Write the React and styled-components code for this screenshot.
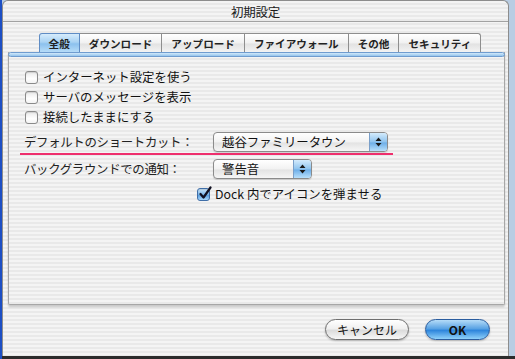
import React from 'react';
import styled, { createGlobalStyle } from 'styled-components';

const GlobalStyle = createGlobalStyle`
  html, body {
    margin: 0;
    padding: 0;
  }
  body {
    width: 515px;
    height: 359px;
    overflow: hidden;
    background: linear-gradient(to right, #1d4fc4 0 2px, #b9cde3 2px);
    font-family: "Noto Sans CJK JP", "Liberation Sans", sans-serif;
    color: #111;
  }
`;

const pinstripe = `repeating-linear-gradient(to bottom, #f4f4f4 0 2px, #e9e9e9 2px 4px)`;

const Page = styled.div`
  display: flex;
  flex-direction: column;
  height: 359px;
`;

const Window = styled.div`
  margin-left: 2px;
  width: 507px;
  height: 356px;
  background: ${pinstripe};
  border: 1px solid #8d8d8d;
  border-bottom: none;
  border-radius: 6px 6px 0 0;
  box-sizing: border-box;
  display: flex;
  flex-direction: column;
`;

const BottomEdge = styled.div`
  height: 3px;
  background: linear-gradient(to right, #1d4fc4 0 2px, #2c2c2c 2px);
`;

const TitleBar = styled.div`
  height: 20px;
  border-bottom: 1px solid #a2a2a2;
  display: flex;
  align-items: center;
  justify-content: center;
  font-size: 12.5px;
  color: #1a1a1a;
  letter-spacing: -0.2px;
`;

const Content = styled.div`
  display: flex;
  flex-direction: column;
  padding: 11px 3px 0 5px;
`;

const TabBar = styled.div`
  display: flex;
  justify-content: center;
  padding-left: 7px;
  height: 19px;
  position: relative;
  z-index: 1;
`;

const Tab = styled.div`
  height: 19px;
  padding: 0 9px;
  box-sizing: border-box;
  display: flex;
  align-items: center;
  font-size: 10.6px;
  font-weight: 700;
  color: #222;
  border: 1px solid ${(p) => (p.$active ? '#5f8cc4' : '#8e8e8e')};
  border-bottom: none;
  border-left-width: ${(p) => (p.$first ? '1px' : '0')};
  border-radius: ${(p) => (p.$first ? '3px 0 0 0' : p.$last ? '0 3px 0 0' : '0')};
  background: ${(p) =>
    p.$active
      ? 'linear-gradient(to bottom, #d6ecfc 0%, #a9d2f3 45%, #8cc1ee 55%, #b6dcf8 100%)'
      : 'linear-gradient(to bottom, #ffffff 0%, #f1f1f1 50%, #e2e2e2 55%, #f3f3f3 100%)'};
`;

const Panel = styled.div`
  height: 252px;
  border: 1px solid #a7a7a7;
  border-top: none;
  border-radius: 0 0 2px 2px;
  box-shadow: 0 2px 2px rgba(0, 0, 0, 0.18);
  background: ${pinstripe};
  display: flex;
  flex-direction: column;
`;

const PanelRule = styled.div`
  height: 3px;
  margin: 0 -1px;
  border-radius: 3px;
  border: 1px solid #6f9ccf;
  background: linear-gradient(to bottom, #d2e9fb, #94c4ec);
`;

const PanelBody = styled.div`
  display: flex;
  flex-direction: column;
  padding: 10px 0 0 16px;
  font-size: 12.4px;
`;

const CheckRow = styled.label`
  display: flex;
  align-items: center;
  gap: 5px;
  height: 20px;
  margin-left: ${(p) => p.$indent || 0}px;
  margin-top: ${(p) => p.$gap || 0}px;
`;

const Box = styled.span`
  width: 13px;
  height: 13px;
  box-sizing: border-box;
  border-radius: 3px;
  border: 1px solid ${(p) => (p.$checked ? '#3f6ea8' : '#8a8a8a')};
  background: ${(p) =>
    p.$checked
      ? 'linear-gradient(to bottom, #cfe8fb 0%, #7ab5e8 50%, #5a9fe0 55%, #a7d6fb 100%)'
      : 'linear-gradient(to bottom, #e9e9e9 0%, #ffffff 60%, #f3f3f3 100%)'};
  box-shadow: inset 0 1px 1px rgba(0, 0, 0, 0.12);
  position: relative;
  flex: none;
`;

const Check = styled.svg`
  position: absolute;
  left: 0;
  top: -3px;
`;

const FormRow = styled.div`
  display: flex;
  align-items: center;
  height: 20px;
  margin-top: ${(p) => p.$gap || 0}px;
  margin-left: -1px;
  position: relative;

  &::after {
    content: '';
    display: ${(p) => (p.$marked ? 'block' : 'none')};
    position: absolute;
    left: -4px;
    width: 373px;
    bottom: -3px;
    height: 2px;
    background: #ee2f6d;
  }
`;

const Label = styled.span`
  width: 189px;
  flex: none;
  color: #222;
  letter-spacing: -0.3px;
`;

const Popup = styled.div`
  width: ${(p) => p.$width}px;
  height: 20px;
  box-sizing: border-box;
  border: 1px solid #8b8b8b;
  border-radius: 4px;
  background: linear-gradient(to bottom, #ffffff 0%, #f2f2f2 50%, #e3e3e3 55%, #f6f6f6 100%);
  box-shadow: 0 1px 1px rgba(0, 0, 0, 0.15);
  display: flex;
  align-items: stretch;
  overflow: hidden;
`;

const PopupText = styled.span`
  flex: 1;
  display: flex;
  align-items: center;
  padding-left: 8px;
  color: #111;
`;

const PopupArrows = styled.span`
  width: 17px;
  border-left: 1px solid #7a9fc9;
  background: linear-gradient(to bottom, #d4ebfc 0%, #8ec3ee 50%, #6daee8 55%, #b8e0fc 100%);
  display: flex;
  align-items: center;
  justify-content: center;
`;

const Buttons = styled.div`
  display: flex;
  justify-content: flex-end;
  gap: 16px;
  margin-top: 14px;
  padding-right: 15px;
`;

const Button = styled.button`
  height: 21px;
  width: ${(p) => p.$width}px;
  border-radius: 11px;
  font-family: "Noto Sans CJK JP", "Liberation Sans", sans-serif;
  font-size: 12px;
  font-weight: ${(p) => (p.$primary ? 700 : 400)};
  color: #111;
  padding: 0;
  border: 1px solid ${(p) => (p.$primary ? '#2a5c9e' : '#6f6f6f')};
  background: ${(p) =>
    p.$primary
      ? 'linear-gradient(to bottom, #b5dcf8 0%, #5aa3e4 45%, #2f86dc 55%, #8fd1fa 100%)'
      : 'linear-gradient(to bottom, #ffffff 0%, #f0f0f0 45%, #dcdcdc 55%, #f7f7f7 100%)'};
  box-shadow: 0 1px 2px rgba(0, 0, 0, 0.25);
  display: flex;
  align-items: center;
  justify-content: center;
`;

const tabs = ['全般', 'ダウンロード', 'アップロード', 'ファイアウォール', 'その他', 'セキュリティ'];

const CheckBox = ({ checked, children, indent, gap }) => (
  <CheckRow $indent={indent} $gap={gap}>
    <Box $checked={checked}>
      {checked && (
        <Check width="14" height="14" viewBox="0 0 14 14">
          <path d="M2.5 8 L5.5 11.5 L12.5 1.5" fill="none" stroke="#112" strokeWidth="2.2" strokeLinecap="round" strokeLinejoin="round" />
        </Check>
      )}
    </Box>
    {children}
  </CheckRow>
);

const Arrows = () => (
  <svg width="7" height="10" viewBox="0 0 7 10">
    <path d="M3.5 0.5 L6.5 4 L0.5 4 Z M0.5 6 L6.5 6 L3.5 9.5 Z" fill="#1a1a1a" />
  </svg>
);

const Select = ({ width, children }) => (
  <Popup $width={width}>
    <PopupText>{children}</PopupText>
    <PopupArrows>
      <Arrows />
    </PopupArrows>
  </Popup>
);

export default function App() {
  return (
    <Page>
      <GlobalStyle />
      <Window>
        <TitleBar>初期設定</TitleBar>
        <Content>
          <TabBar>
            {tabs.map((t, i) => (
              <Tab key={t} $active={i === 0} $first={i === 0} $last={i === tabs.length - 1}>
                {t}
              </Tab>
            ))}
          </TabBar>
          <Panel>
            <PanelRule />
            <PanelBody>
              <CheckBox>インターネット設定を使う</CheckBox>
              <CheckBox>サーバのメッセージを表示</CheckBox>
              <CheckBox>接続したままにする</CheckBox>
              <FormRow $gap={5} $marked>
                <Label>デフォルトのショートカット：</Label>
                <Select width={175}>越谷ファミリータウン</Select>
              </FormRow>
              <FormRow $gap={7}>
                <Label>バックグラウンドでの通知：</Label>
                <Select width={99}>警告音</Select>
              </FormRow>
              <CheckBox checked indent={172} gap={5}>Dock 内でアイコンを弾ませる</CheckBox>
            </PanelBody>
          </Panel>
          <Buttons>
            <Button $width={84}>キャンセル</Button>
            <Button $width={65} $primary>OK</Button>
          </Buttons>
        </Content>
      </Window>
      <BottomEdge />
    </Page>
  );
}
